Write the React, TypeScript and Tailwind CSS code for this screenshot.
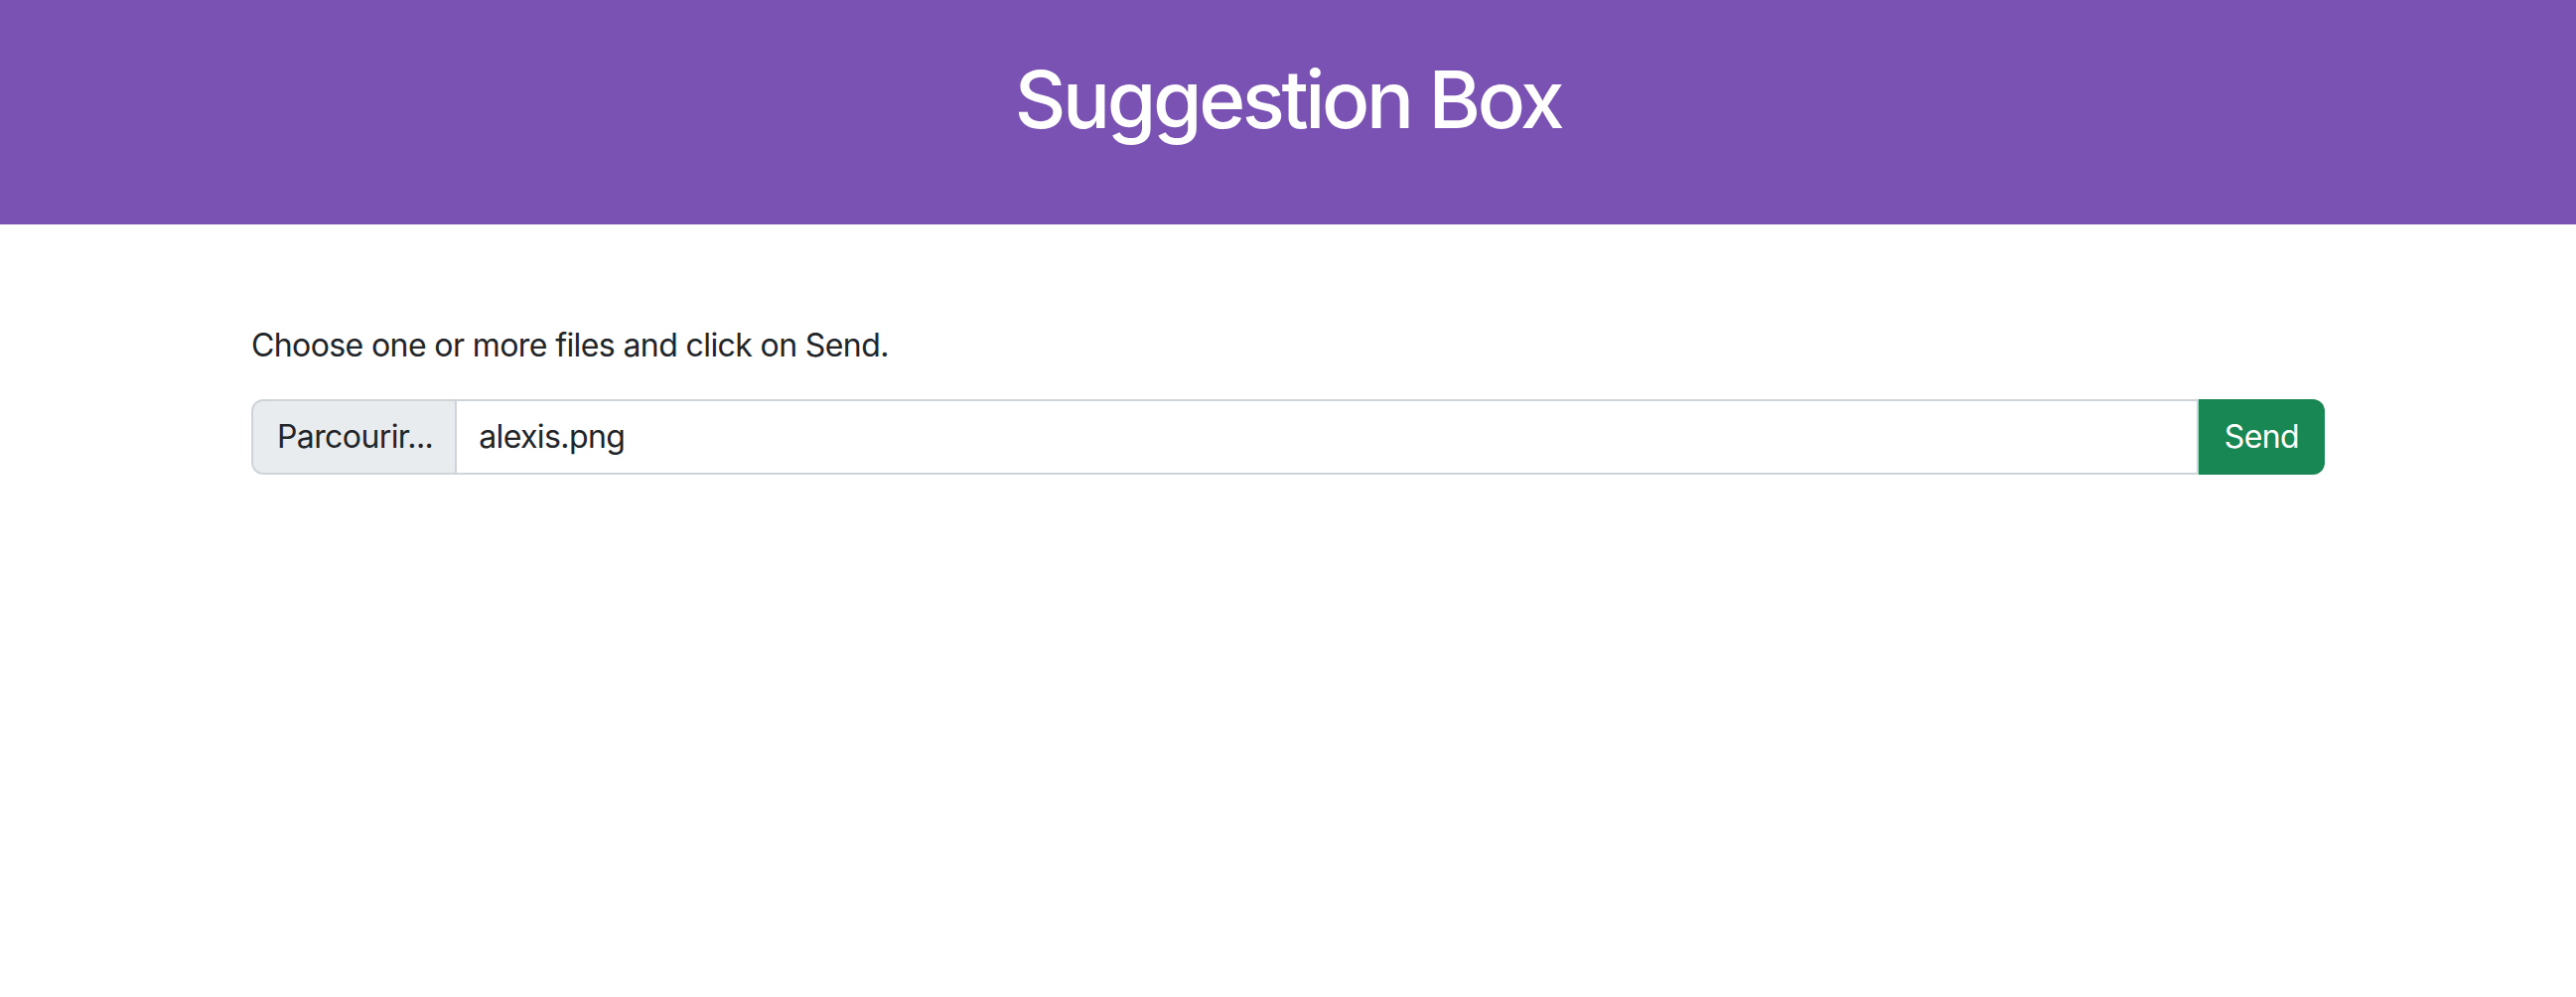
export default function App() {
    return (
        <div className="min-h-screen bg-white text-[#212529] font-['Inter','Liberation_Sans',sans-serif]">
            <header className="bg-[#7952b3] pt-[52px] pb-[78px] text-center">
                <h1 className="text-[80px] leading-[96px] font-medium tracking-[-3.4px] text-white">Suggestion Box</h1>
            </header>

            <main className="max-w-[2088px] mx-auto pt-[98px] tracking-[-0.6px]">
                <p className="text-[32px] leading-[48px] mb-[30px]">Choose one or more files and click on Send.</p>

                <form className="flex h-[76px]" onSubmit={(e) => e.preventDefault()}>
                    <label className="flex items-center pl-[24px] pr-[22px] bg-[#e9ecef] border-2 border-[#ced4da] rounded-l-[12px] text-[32px] cursor-pointer">
                        Parcourir...
                    </label>
                    <div className="flex-1 flex items-center px-[22px] border-y-2 border-r-2 border-[#ced4da] text-[32px]">
                        alexis.png
                    </div>
                    <button type="submit" className="px-[26px] bg-[#198754] text-white text-[32px] tracking-[-0.6px] rounded-r-[12px]">
                        Send
                    </button>
                </form>
            </main>
        </div>
    );
}
